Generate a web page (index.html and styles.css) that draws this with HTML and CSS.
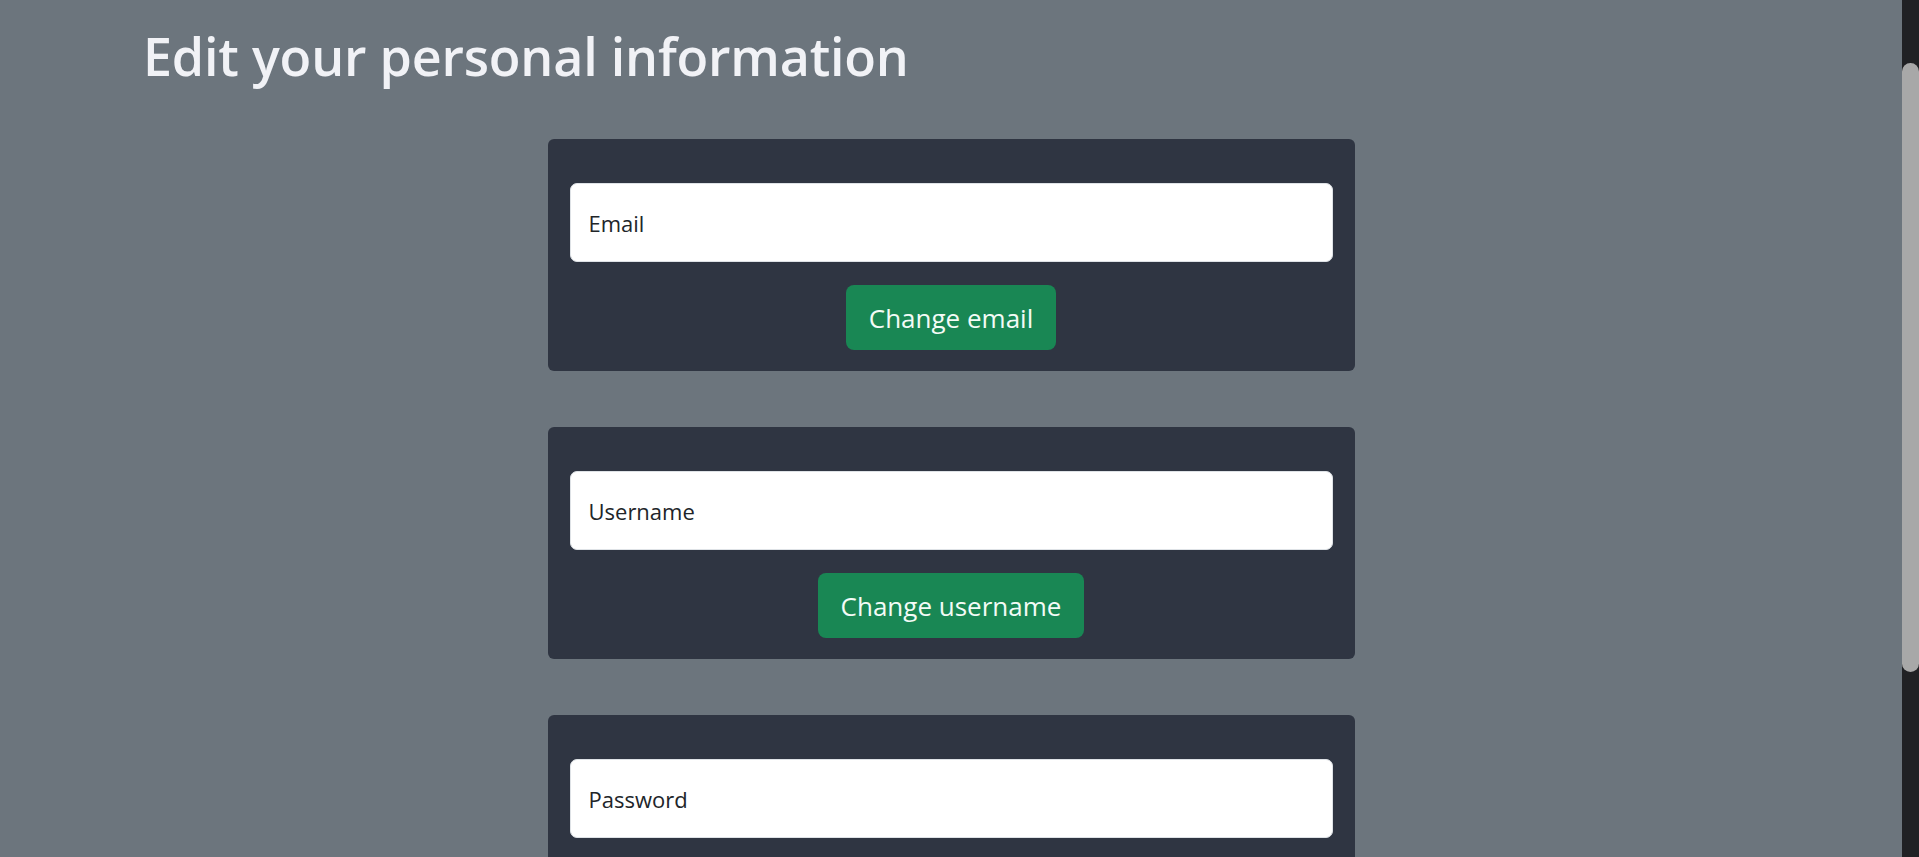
FILE: index.html
```html
<!DOCTYPE html>
<html lang="en">
<head>
<meta charset="utf-8">
<title>Edit your personal information</title>
<link rel="stylesheet" href="styles.css">
</head>
<body>
  <div class="page">
    <h1 class="title">Edit your personal information</h1>
    <div class="cards">
      <form class="card">
        <input class="field" type="email" placeholder="Email">
        <button class="btn" type="button">Change email</button>
      </form>
      <form class="card">
        <input class="field" type="text" placeholder="Username">
        <button class="btn" type="button">Change username</button>
      </form>
      <form class="card">
        <input class="field" type="password" placeholder="Password">
        <button class="btn" type="button">Change password</button>
      </form>
    </div>
  </div>
  <div class="scrollbar"><div class="thumb"></div></div>
</body>
</html>
```
FILE: styles.css
```css
html, body {
  margin: 0;
  height: 100%;
}
body {
  display: flex;
  background: #6c757d;
  overflow: hidden;
  font-family: "Open Sans", "Noto Sans", sans-serif;
}
.page {
  flex: 1;
  min-width: 0;
}
.title {
  margin: 0;
  padding: 25px 0 0 143px;
  font-size: 52px;
  font-weight: 600;
  line-height: 1.2;
  color: #f1f2f6;
  letter-spacing: -0.2px;
}
.cards {
  display: flex;
  flex-direction: column;
  align-items: center;
  gap: 56px;
  margin-top: 52px;
}
.card {
  width: 807px;
  box-sizing: border-box;
  background: #2f3542;
  border-radius: 6px;
  padding: 44px 22px 21px;
  display: flex;
  flex-direction: column;
  align-items: center;
  gap: 23px;
  margin: 0;
}
.field {
  width: 100%;
  height: 79px;
  box-sizing: border-box;
  border: 1px solid #dee2e6;
  border-radius: 7px;
  background: #fff;
  padding: 0 18px;
  font-family: inherit;
  font-size: 22px;
  color: #212529;
  outline: none;
}
.field::placeholder {
  color: #212529;
  opacity: 1;
}
.btn {
  height: 65px;
  padding: 0 23px;
  border: none;
  border-radius: 8px;
  background: #198754;
  color: #f3fbf6;
  font-family: inherit;
  font-size: 26px;
  cursor: pointer;
}
.scrollbar {
  width: 17px;
  flex: none;
  background: #202124;
  padding-top: 63px;
  box-sizing: border-box;
}
.thumb {
  height: 609px;
  background: #a8a8a8;
  border-radius: 9px;
}
```
